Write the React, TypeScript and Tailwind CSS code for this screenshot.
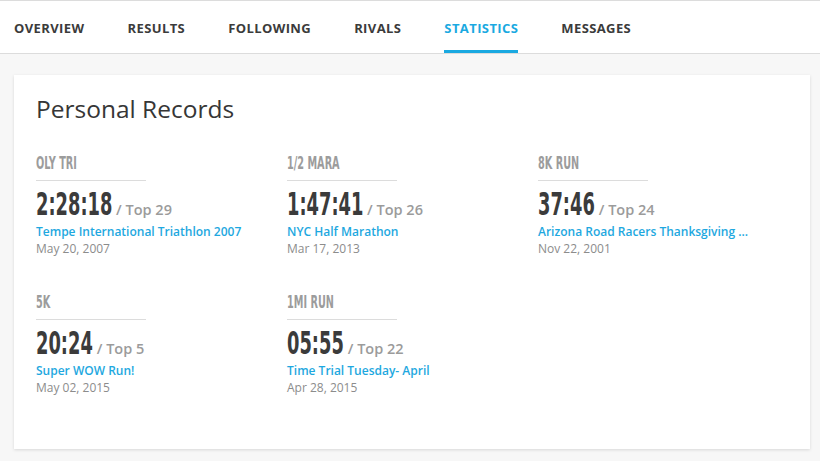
import React from 'react';

const tabs = ['OVERVIEW', 'RESULTS', 'FOLLOWING', 'RIVALS', 'STATISTICS', 'MESSAGES'];

interface PR {
  label: string;
  time: string;
  rank: string;
  event: string;
  date: string;
}

const records: PR[] = [
  { label: 'OLY TRI', time: '2:28:18', rank: 'Top 29', event: 'Tempe International Triathlon 2007', date: 'May 20, 2007' },
  { label: '1/2 MARA', time: '1:47:41', rank: 'Top 26', event: 'NYC Half Marathon', date: 'Mar 17, 2013' },
  { label: '8K RUN', time: '37:46', rank: 'Top 24', event: 'Arizona Road Racers Thanksgiving ...', date: 'Nov 22, 2001' },
  { label: '5K', time: '20:24', rank: 'Top 5', event: 'Super WOW Run!', date: 'May 02, 2015' },
  { label: '1MI RUN', time: '05:55', rank: 'Top 22', event: 'Time Trial Tuesday- April', date: 'Apr 28, 2015' },
];

const narrow = "font-['DejaVu_Sans_Condensed','DejaVu_Sans',sans-serif]";

// condensed face is still too wide, so the time is squeezed; pull back the
// space the transform leaves behind (advances measured: digit 20px, colon 12px)
const SQUEEZE = 0.62;
function timeGap(t: string) {
  const colons = t.split(':').length - 1;
  const digits = t.length - colons;
  return -(1 - SQUEEZE) * (digits * 20 + colons * 12);
}

function Record({ r }: { r: PR }) {
  return (
    <div className="flex flex-col">
      <div className="w-[110px] border-b border-[#dcdcdc] pb-[5px]">
        <span
          className={`${narrow} inline-block origin-left scale-x-[0.6] whitespace-nowrap text-[18px] font-bold leading-[22px] text-[#9c9c9c]`}
        >
          {r.label}
        </span>
      </div>
      <div className="mt-[8px] flex items-baseline whitespace-nowrap">
        <span
          className={`${narrow} inline-block origin-left scale-x-[0.62] text-[32px] font-bold leading-[30px] text-[#3b3b3b]`}
          style={{ marginRight: timeGap(r.time) }}
        >
          {r.time}
        </span>
        <span className="ml-[4px] text-[14.5px] font-semibold leading-[16px] text-[#9b9b9b]">/ {r.rank}</span>
      </div>
      <a className="mt-[5px] whitespace-nowrap text-[12px] font-semibold leading-[16px] text-[#1ea8e0]">{r.event}</a>
      <div className="mt-[1px] text-[12px] leading-[16px] text-[#8c8c8c]">{r.date}</div>
    </div>
  );
}

export default function App() {
  return (
    <div className="min-h-[461px] bg-[#f7f7f7] font-['Open_Sans',sans-serif]">
      <nav className="flex h-[54px] gap-[43px] border-y border-[#dcdcdc] bg-white pl-[14px]">
        {tabs.map((t) => (
          <div
            key={t}
            className={`flex items-center border-b-[3px] pt-[6px] text-[13px] font-bold tracking-[0.4px] ${
              t === 'STATISTICS' ? 'border-[#1aa9e1] text-[#1aa9e1]' : 'border-transparent text-[#3b3b3b]'
            }`}
          >
            {t}
          </div>
        ))}
      </nav>

      <main className="pt-[21px] pl-[14px]">
        <section className="h-[374px] w-[796px] bg-white pt-[20px] pl-[22px] shadow-[0_1px_3px_rgba(0,0,0,0.13)]">
          <h1 className="mb-[28px] text-[24.5px] font-normal leading-[28px] text-[#363636]">Personal Records</h1>
          <div className="grid grid-cols-[251px_251px_251px] gap-y-[33px]">
            {records.map((r) => (
              <Record key={r.label} r={r} />
            ))}
          </div>
        </section>
      </main>
    </div>
  );
}
